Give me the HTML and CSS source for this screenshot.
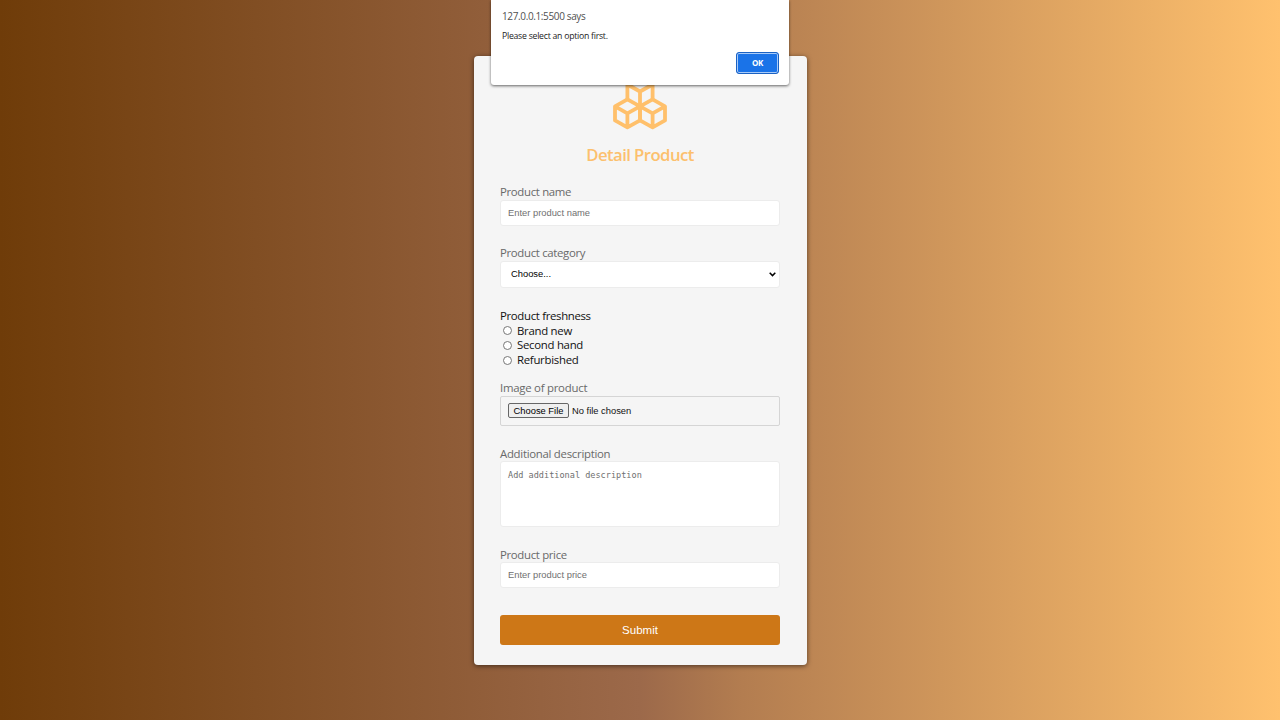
FILE: index.html
```html
<!DOCTYPE html>
<html lang="en">
<head>
<meta charset="utf-8">
<title>Detail Product</title>
<link rel="stylesheet" href="styles.css">
</head>
<body>
<form class="card">
  <header class="head">
    <svg class="logo" width="56" height="60" viewBox="612 70 56 60" fill="none" stroke="#ffc06b" stroke-width="3.8" stroke-linejoin="round">
      <path d="M627.4 99.3V84.5L640 77.5L652.6 84.5V99.3M627.4 84.5L640 91.5L652.6 84.5M640 91.5V106.3"/>
      <path d="M640 106.3L627.4 99.3L615 106.3V120.4L627.4 127.4L640 120.4ZM615 106.3L627.4 113.3L640 106.3M627.4 113.3V127.4"/>
      <path d="M640 106.3L652.6 99.3L665 106.3V120.4L652.6 127.4L640 120.4ZM665 106.3L652.6 113.3L640 106.3M652.6 113.3V127.4"/>
    </svg>
    <h1 class="title">Detail Product</h1>
  </header>
  <div class="field field-name">
    <label class="label" for="name">Product name</label>
    <input class="control" id="name" type="text" placeholder="Enter product name">
  </div>
  <div class="field field-category">
    <label class="label" for="category">Product category</label>
    <div class="select-wrap">
      <select class="control select" id="category"><option>Choose...</option></select>
      <svg class="chevron" width="7" height="5" viewBox="0 0 7 5" fill="none" stroke="#000" stroke-width="1.5"><path d="M.7 .8L3.5 3.6L6.3 .8"/></svg>
    </div>
  </div>
  <div class="field field-fresh">
    <span class="label dark">Product freshness</span>
    <label class="option"><input class="radio" type="radio" name="fresh"><span>Brand new</span></label>
    <label class="option"><input class="radio" type="radio" name="fresh"><span>Second hand</span></label>
    <label class="option"><input class="radio" type="radio" name="fresh"><span>Refurbished</span></label>
  </div>
  <div class="field field-image">
    <span class="label">Image of product</span>
    <div class="file"><button class="file-button" type="button">Choose File</button><span>No file chosen</span></div>
  </div>
  <div class="field field-description">
    <label class="label" for="description">Additional description</label>
    <textarea class="control area" id="description" placeholder="Add additional description"></textarea>
  </div>
  <div class="field field-price">
    <label class="label" for="price">Product price</label>
    <input class="control" id="price" type="text" placeholder="Enter product price">
  </div>
  <button class="submit" type="button">Submit</button>
</form>
<section class="dialog" role="alertdialog">
  <div class="dialog-title">127.0.0.1:5500 says</div>
  <div class="dialog-text">Please select an option first.</div>
  <button class="ok" type="button">OK</button>
</section>
</body>
</html>
```
FILE: styles.css
```css
* { box-sizing: border-box; }
body {
  margin: 0;
  height: 720px;
  overflow: hidden;
  padding-top: 56px;
  font-family: "Open Sans", sans-serif;
  background: linear-gradient(to right, #6f3c09, #9c694a 50%, #b37d50 58%, #ffc16e);
}
.card {
  width: 333px;
  height: 609px;
  margin: 0 auto;
  padding: 14px 26.5px 20px;
  display: flex;
  flex-direction: column;
  background: #f5f5f5;
  border-radius: 4px;
  box-shadow: 0 1px 5px rgba(0, 0, 0, .55);
}
.head { display: flex; flex-direction: column; align-items: center; height: 114px; }
.logo { display: block; }
.title { margin: 13px 0 0; font-size: 16.7px; line-height: 23px; font-weight: 600; letter-spacing: -.55px; color: #fcc06d; }
.field { display: flex; flex-direction: column; }
.field-name { height: 61px; }
.field-category { height: 62px; }
.field-fresh { height: 74px; }
.field-image { height: 65px; }
.field-description { height: 101px; }
.field-price { height: 69px; }
.label { height: 16px; font-size: 11.4px; line-height: 16px; letter-spacing: -.33px; color: #696969; }
.field-description .label, .field-price .label { line-height: 17px; }
.field-description .label { letter-spacing: -.28px; }
.field-image .label { letter-spacing: -.25px; }
.field .dark { color: #111; height: 17px; line-height: 18px; }
.control {
  width: 100%;
  height: 26px;
  padding: 0 7px;
  border: 1px solid #ececec;
  border-radius: 3px;
  background: #fff;
  font-family: "Liberation Sans", Arial, sans-serif;
  font-size: 9.35px;
  outline: none;
}
.control::placeholder { color: #707070; }
.select-wrap { position: relative; display: flex; }
.select { height: 27px; padding: 0 10px; color: #000; appearance: none; }
.chevron { position: absolute; right: 4px; top: 11px; }
.option { display: flex; align-items: center; gap: 5px; height: 14.6px; padding-left: 3px; font-size: 11.4px; line-height: 14.6px; letter-spacing: -.28px; color: #111; }
.radio { width: 9px; height: 9px; margin: 0; }
.file {
  height: 30px;
  display: flex;
  align-items: center;
  gap: 3px;
  padding: 0 7px 1px;
  border: 1px solid #d5d5d5;
  border-radius: 2px;
  font-family: "Liberation Sans", Arial, sans-serif;
  font-size: 9.35px;
  color: #111;
}
.file-button {
  width: 61px;
  height: 15px;
  padding: 0;
  border: 1px solid #666;
  border-radius: 2px;
  background: #efefef;
  font: inherit;
  color: #000;
}
.area { height: 66px; padding: 8px 7px; resize: none; font-family: "DejaVu Sans Mono", monospace; font-size: 8.55px; }
.submit {
  height: 30px;
  padding: 0 0 1px;
  border: 0;
  border-radius: 3px;
  background: #cd7717;
  color: #fff;
  font-family: "Liberation Sans", Arial, sans-serif;
  font-size: 11.5px;
}
.dialog {
  position: absolute;
  top: 0;
  left: 491px;
  width: 298px;
  height: 85px;
  padding: 9px 10px 0 11px;
  display: flex;
  flex-direction: column;
  background: #fff;
  border-radius: 0 0 3px 3px;
  box-shadow: 0 1px 3px rgba(0, 0, 0, .6);
}
.dialog-title { height: 20px; font-size: 10px; line-height: 14px; letter-spacing: -.37px; color: #505050; }
.dialog-text { height: 23px; font-size: 8.7px; line-height: 14px; letter-spacing: -.25px; color: #222; }
.ok {
  align-self: flex-end;
  width: 43px;
  height: 22px;
  padding: 0;
  border: 1px solid #1a62c4;
  border-radius: 3px;
  background: #1a73e8;
  box-shadow: inset 0 0 0 1px #a9cbf8;
  color: #fff;
  font: 700 8px/18px "Open Sans", sans-serif;
  letter-spacing: -.3px;
}
```
